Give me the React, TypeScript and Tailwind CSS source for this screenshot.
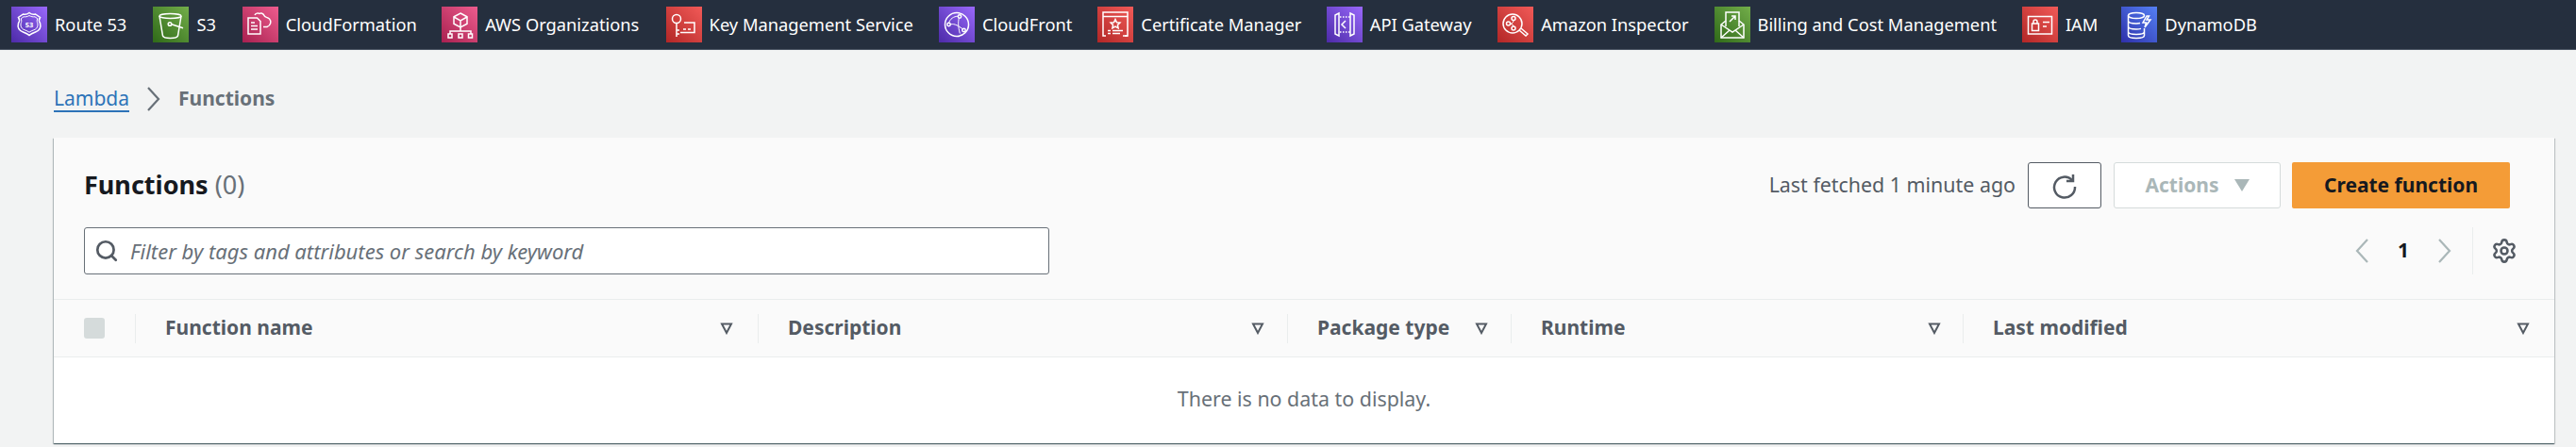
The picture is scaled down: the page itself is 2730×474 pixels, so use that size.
import type { ReactNode } from "react"
import { Search, Settings } from "lucide-react"

const PURPLE = "bg-gradient-to-tr from-[#4d2aa8] to-[#9a68fb]"
const GREEN = "bg-gradient-to-tr from-[#2f6a18] to-[#73ae4a]"
const PINK = "bg-gradient-to-tr from-[#a81f50] to-[#ee5c8f]"
const RED = "bg-gradient-to-tr from-[#b22626] to-[#f25a58]"
const BLUE = "bg-gradient-to-tr from-[#2f2fa9] to-[#5580f5]"

interface Service {
  name: string
  color: string
  textClass: string
  icon: ReactNode
}

const services: Service[] = [
  {
    name: "Route 53",
    color: PURPLE,
    textClass: "w-[77px]",
    icon: (
      <>
        <path d="M19 6.500c2 1.600 4.500 2 6.500 1.500l5 3.500c-1.400 2-1.400 4 0 6 1.200 4.500-1 8-5 9.500-2.800 1-5 2-6.500 3.500-1.500-1.500-3.700-2.500-6.500-3.500-4-1.500-6.200-5-5-9.500 1.400-2 1.400-4 0-6l5-3.500c2 .5 4.500.1 6.500-1.500z" />
        <path d="M19 9.500c1.800 1.200 4 1.600 6 1.300l2.800 2c-.8 1.600-.8 3.200 0 4.900.8 3.400-.8 6-4 7.100-1.900.7-3.500 1.400-4.800 2.400-1.300-1-2.900-1.700-4.800-2.400-3.200-1.100-4.800-3.700-4-7.100.8-1.700.8-3.300 0-4.900l2.800-2c2 .3 4.200-.1 6-1.300z" strokeWidth="1" />
        <text x="19" y="22" textAnchor="middle" fontSize="7.500" fontWeight="700" fill="#fff" stroke="none">53</text>
      </>
    ),
  },
  {
    name: "S3",
    color: GREEN,
    textClass: "w-[21px]",
    icon: (
      <>
        <ellipse cx="18.500" cy="10" rx="11.500" ry="2.500" />
        <path d="M7 10l3.500 21c.5 1.500 4 2.500 8 2.500s7.500-1 8-2.500L30 10" />
        <circle cx="18" cy="18.500" r="1.800" />
        <path d="M19.800 18.800l12.200 4" />
      </>
    ),
  },
  {
    name: "CloudFormation",
    color: PINK,
    textClass: "w-[138px]",
    icon: (
      <>
        <path d="M6 12h9.500l3.500 3.500V29H6z" />
        <path d="M9 17h4M9 20.500h7M9 24h7" />
        <path d="M13 9c1-2 3.500-2.500 5-1.500 1.500-1 4-.5 5 2 .5 2 3 1.500 5.500 3.500 2.500 2.500 1.500 7-2.500 8.500H22" />
      </>
    ),
  },
  {
    name: "AWS Organizations",
    color: PINK,
    textClass: "w-[164px]",
    icon: (
      <>
        <path d="M20 7l7 3.800v7.400L20 22l-7-3.800v-7.400z" />
        <path d="M13 11l7 3.800 7-3.800M20 14.800V22M20 22v4M9 29v-3h22v3" />
        <rect x="7" y="29" width="4" height="4" />
        <rect x="18" y="29" width="4" height="4" />
        <rect x="28.500" y="29" width="4" height="4" />
      </>
    ),
  },
  {
    name: "Key Management Service",
    color: RED,
    textClass: "w-[216px]",
    icon: (
      <>
        <circle cx="11" cy="13" r="4.500" />
        <path d="M11 17.500V32M11 25h3M11 29h3" />
        <path d="M19 17h11v10.500H15M18 24h3M23 24h3" />
      </>
    ),
  },
  {
    name: "CloudFront",
    color: PURPLE,
    textClass: "w-[95px]",
    icon: (
      <>
        <circle cx="19" cy="19" r="12.500" />
        <circle cx="22" cy="10.500" r="1.700" />
        <circle cx="10.500" cy="19" r="1.700" />
        <circle cx="26.500" cy="25" r="1.700" />
        <path d="M12 19c3-1 6.500-.5 13.500 5M21.300 12c-1 5-1 9 1 16.500M21 10C15 10.500 12 13 10.500 17.500" strokeWidth="1" />
      </>
    ),
  },
  {
    name: "Certificate Manager",
    color: RED,
    textClass: "w-[169px]",
    icon: (
      <>
        <path d="M9 31H6V6h26v25h-3" />
        <path d="M6 10.500h26" />
        <path d="M19 13.500l1.500 3.200 3.400.4-2.500 2.300.7 3.400-3.100-1.700-3.100 1.700.7-3.400-2.500-2.300 3.400-.4z" />
        <path d="M11 25.500h3M16 25.500h11M11 28.500h3M16 28.500h8M27 31h5" />
      </>
    ),
  },
  {
    name: "API Gateway",
    color: PURPLE,
    textClass: "w-[108px]",
    icon: (
      <>
        <path d="M13 7l-4 2v20l4 2zM25 7l4 2v20l-4 2z" />
        <path d="M14 11h11M14 27h11" strokeDasharray="1.500 1.500" />
        <path d="M20 15l-4 4 4 4" />
      </>
    ),
  },
  {
    name: "Amazon Inspector",
    color: RED,
    textClass: "w-[156px]",
    icon: (
      <>
        <circle cx="16" cy="18" r="10" />
        <path d="M23 25l7 6 2-2-7-6" />
        <circle cx="17" cy="12.500" r="2" />
        <circle cx="11.500" cy="18" r="2" />
        <circle cx="17" cy="23" r="2" />
        <path d="M17 14.500c0 3-2 3.500-3.500 3.500M13.500 18.500c2 0 3.500 1 3.500 2.500" strokeWidth="1" />
      </>
    ),
  },
  {
    name: "Billing and Cost Management",
    color: GREEN,
    textClass: "w-[253px]",
    icon: (
      <>
        <path d="M12 21V6h14v15" />
        <path d="M16 16l6-6M18 10h4v4" />
        <path d="M12 15l-5 4v14h24V19l-5-4" />
        <path d="M7 19l12 8 12-8M7 33l9-8M31 33l-9-8" />
      </>
    ),
  },
  {
    name: "IAM",
    color: RED,
    textClass: "w-[32px]",
    icon: (
      <>
        <rect x="6.500" y="10.500" width="25" height="18.500" />
        <rect x="10.500" y="18" width="7" height="7.500" />
        <path d="M12 18v-2a2 2 0 0 1 4 0v2M22 16.500h7M22 21h4" />
      </>
    ),
  },
  {
    name: "DynamoDB",
    color: BLUE,
    textClass: "w-[96px]",
    icon: (
      <>
        <ellipse cx="16" cy="9.500" rx="8.500" ry="3" />
        <path d="M7.500 9.500v21c0 1.800 3.800 3 8.500 3s8.500-1.200 8.500-3V23M7.500 15c0 1.800 3.800 3 8.500 3 1.500 0 2.800-.1 4-.4M7.500 21c0 1.800 3.800 3 8.500 3 2 0 3.500-.2 5-.6M7.500 26.500c0 1.800 3.800 3 8.500 3s8.500-1.200 8.500-3" />
        <path d="M27 10l-4 7h3.500l-1.500 5 6-8h-4l2.500-4z" />
      </>
    ),
  },
]

const columns = [
  { label: "Function name", className: "w-[660px] pr-[26px]" },
  { label: "Description", className: "w-[561px] pr-[24px]" },
  { label: "Package type", className: "w-[237px] pr-[24px]" },
  { label: "Runtime", className: "w-[479px] pr-[23px]" },
  { label: "Last modified", className: "flex-1 pr-[26px]" },
]

function ServiceLink({ service }: { service: Service }) {
  return (
    <a className="flex items-center gap-2 text-[18.3px] text-white">
      <span className={`flex h-[38px] w-[38px] shrink-0 ${service.color}`}>
        <svg viewBox="0 0 38 38" className="h-[38px] w-[38px]" fill="none" stroke="#fff" strokeWidth="1.500">
          {service.icon}
        </svg>
      </span>
      <span className={`whitespace-nowrap ${service.textClass}`}>{service.name}</span>
    </a>
  )
}

function FilterCaret() {
  return (
    <svg viewBox="0 0 14 14" className="h-[14px] w-[14px] shrink-0" fill="none" stroke="#545b64" strokeWidth="2">
      <path d="M2 2.500h10L7 12z" />
    </svg>
  )
}

function Chevron({ dir, color }: { dir: "left" | "right"; color: string }) {
  return (
    <svg viewBox="0 0 16 28" className="h-[28px] w-[16px]" fill="none" stroke={color} strokeWidth="2.200">
      <path d={dir === "left" ? "M14 2L3 14l11 12" : "M2 2l11 12L2 26"} />
    </svg>
  )
}

export default function App() {
  return (
    <div className="min-h-[474px] overflow-hidden bg-[#f2f3f3] font-['Noto_Sans',sans-serif]">
      <nav className="flex h-[53px] items-center gap-[27.4px] border-b border-[#4b5563] bg-[#252f3e] pl-3">
        {services.map((service) => (
          <ServiceLink key={service.name} service={service} />
        ))}
      </nav>

      <main className="pl-[57px] pr-[23px]">
        <div className="mt-[32px] flex h-[40px] items-center text-[21px]">
          <a className="w-[80px] border-b-2 border-[#2d73b8] leading-[26px] text-[#2d73b8]">Lambda</a>
          <span className="ml-[18px] mr-[18px]">
            <Chevron dir="right" color="#687078" />
          </span>
          <span className="font-bold text-[#687078]">Functions</span>
        </div>

        <section className="mt-[21px] h-[324px] bg-white shadow-[0_1px_1px_0_rgba(0,28,36,0.5),1px_1px_1px_0_rgba(0,28,36,0.15),-1px_1px_1px_0_rgba(0,28,36,0.2)]">
          <div className="h-[172px] border-b border-[#eaeded] bg-[#fafafa] pl-[32px] pr-[47px] pt-[26px]">
            <div className="flex h-[49px] items-center">
              <h2 className="text-[27px] font-bold text-[#16191f]">
                Functions <span className="font-normal text-[#687078]">(0)</span>
              </h2>
              <span className="ml-auto text-[21.4px] text-[#545b64]">Last fetched 1 minute ago</span>
              <button type="button" className="ml-[13px] flex h-[49px] w-[78px] items-center justify-center rounded-[3px] border border-[#545b64] bg-white">
                <svg viewBox="0 0 28 28" className="h-[28px] w-[28px]" fill="none" stroke="#545b64" strokeWidth="2.500">
                  <path d="M22 8a11 11 0 1 0 3 7" />
                  <path d="M16 9h7V2" />
                </svg>
              </button>
              <button type="button" className="ml-[13px] flex h-[49px] w-[177px] items-center justify-center gap-4 rounded-[3px] border border-[#d5dbdb] bg-white text-[21px] font-bold text-[#aab7b8]">
                Actions
                <svg viewBox="0 0 16 13" className="h-[13px] w-[16px]" fill="#aab7b8">
                  <path d="M0 0h16L8 13z" />
                </svg>
              </button>
              <button type="button" className="ml-[12px] h-[49px] w-[231px] rounded-[2px] bg-[#f49c37] text-[21px] font-bold text-[#16191f]">
                Create function
              </button>
            </div>

            <div className="mt-[20px] flex items-center">
              <div className="flex h-[50px] w-[1023px] items-center gap-[12px] rounded-[3px] border border-[#687078] bg-white pl-[10px]">
                <Search className="h-[26px] w-[26px] text-[#545b64]" strokeWidth={2.5} />
                <span className="text-[22px] italic text-[#687078]">Filter by tags and attributes or search by keyword</span>
              </div>
              <div className="ml-auto mr-[-8px] flex items-center">
                <Chevron dir="left" color="#aab7b8" />
                <span className="mx-[30px] w-[12px] text-center text-[21px] font-bold text-[#16191f]">1</span>
                <Chevron dir="right" color="#aab7b8" />
                <span className="ml-[21px] mr-[19px] h-[50px] border-l border-[#eaeded]" />
                <Settings className="h-[28px] w-[28px] text-[#545b64]" strokeWidth={2.2} />
              </div>
            </div>
          </div>

          <div className="flex h-[61px] items-center border-b border-[#eaeded] bg-[#fafafa]">
            <div className="flex w-[86px] shrink-0 pl-[32px]">
              <span className="h-[22px] w-[22px] rounded-[3px] bg-[#d5dbdb]" />
            </div>
            {columns.map((col) => (
              <div key={col.label} className={`flex h-[31px] shrink-0 items-center justify-between border-l border-[#eaeded] pl-[31px] ${col.className}`}>
                <span className="whitespace-nowrap text-[21px] font-bold text-[#545b64]">{col.label}</span>
                <FilterCaret />
              </div>
            ))}
          </div>

          <p className="pt-[28px] text-center text-[21.4px] text-[#687078]">There is no data to display.</p>
        </section>
      </main>
    </div>
  )
}
